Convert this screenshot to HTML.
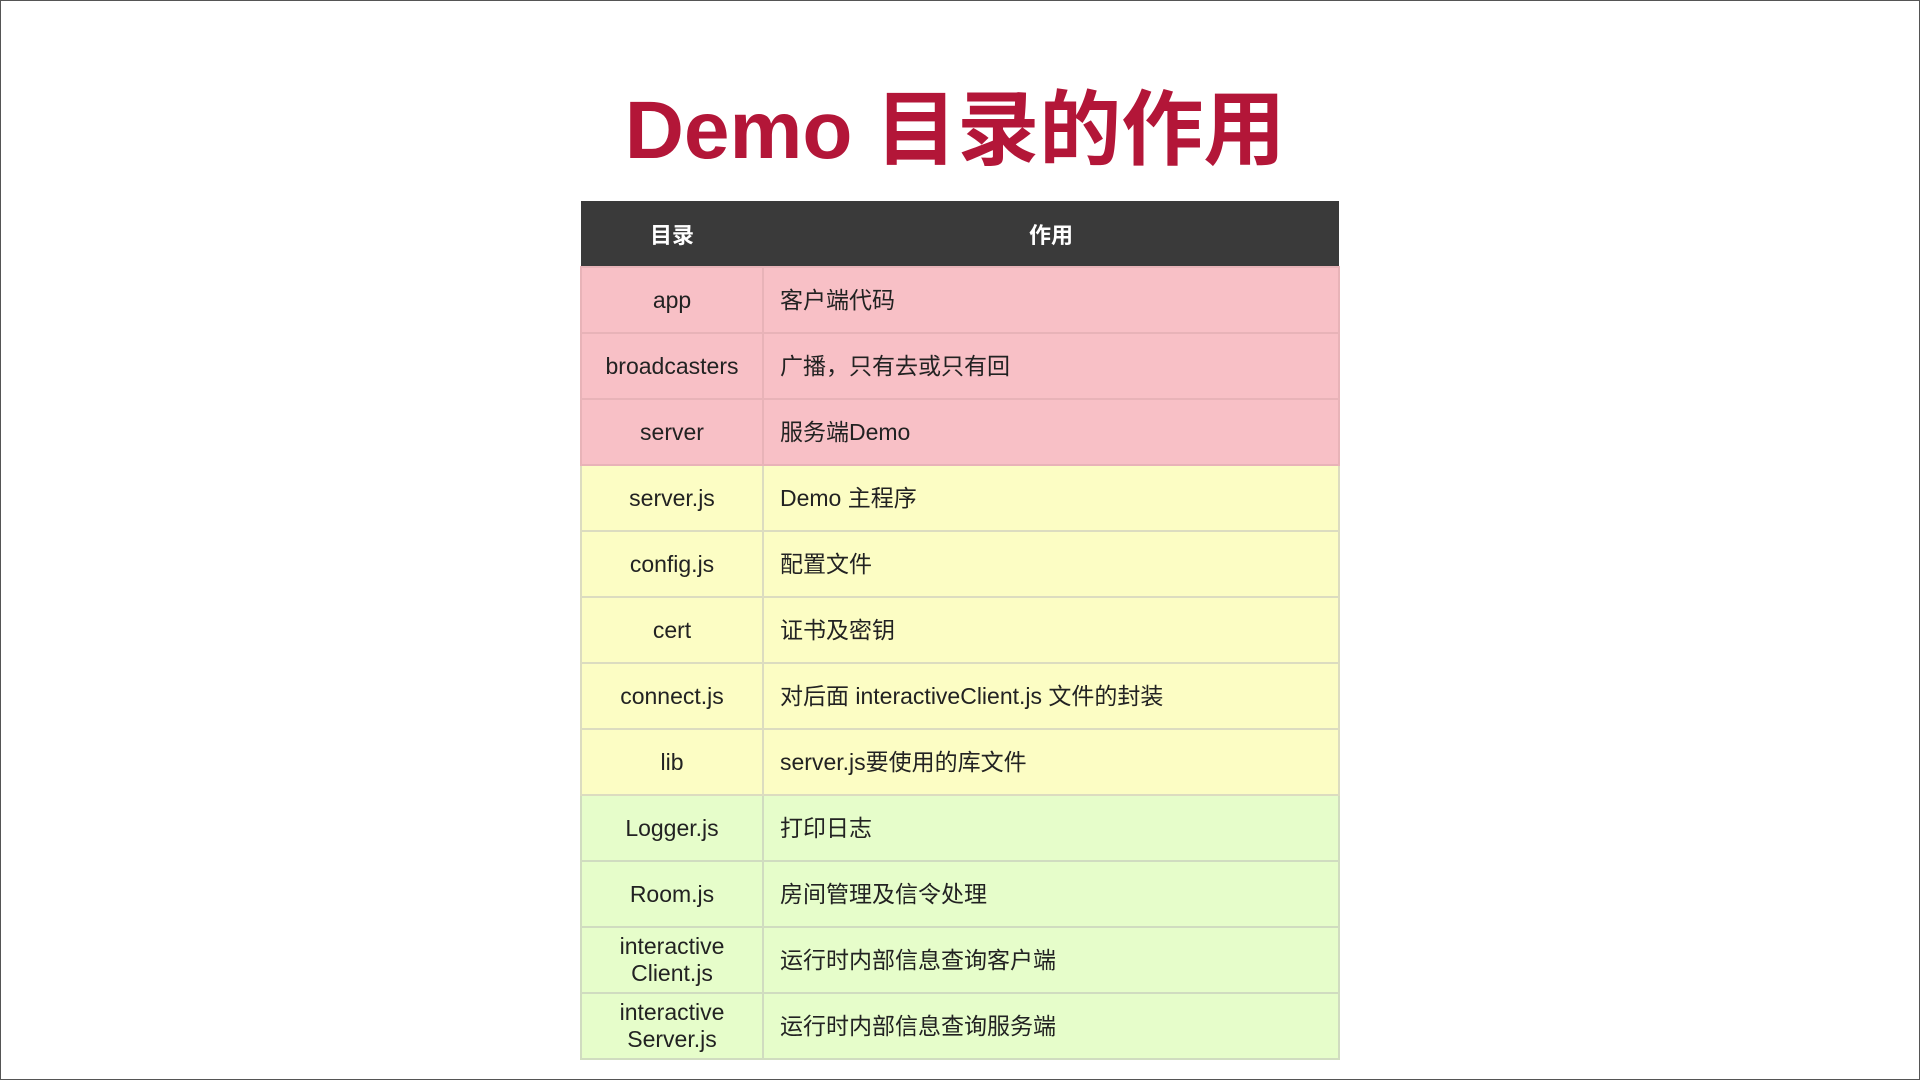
<!DOCTYPE html>
<html><head><meta charset="utf-8"><style>
body{margin:0;width:1920px;height:1080px;background:#fff;position:relative;overflow:hidden;font-family:"Liberation Sans","Noto Sans CJK SC",sans-serif;}
.frame{position:absolute;left:0;top:0;width:1918px;height:1078px;border:1px solid #555;}
h1{position:absolute;left:0;width:1910px;top:81px;margin:0;text-align:center;font-size:82px;line-height:100px;font-weight:bold;color:#b31638;font-family:"Liberation Sans","Noto Sans CJK SC",sans-serif;}
table{position:absolute;left:580px;top:201px;width:760px;border-collapse:collapse;font-size:23px;color:#222;}
th{background:#3a3a3a;color:#fff;height:65px;font-weight:bold;font-size:22px;padding:0;}
td{height:64px;border:2px solid #d9d9d9;padding:0;line-height:27px;}
td:first-child{width:180px;text-align:center;}
td:last-child{padding-left:16px;}
.p td{background:#f8c0c6;border-color:#e8b3b8;}
.y td{background:#fcfdc4;border-color:#dcdcc0;}
.g td{background:#e6fdca;border-color:#d0dcc0;}
</style></head><body>
<div class="frame"></div>
<h1>Demo 目录的作用</h1>
<table>
<tr><th style="width:182px">目录</th><th>作用</th></tr>
<tr class="p"><td>app</td><td>客户端代码</td></tr>
<tr class="p"><td>broadcasters</td><td>广播，只有去或只有回</td></tr>
<tr class="p"><td>server</td><td>服务端Demo</td></tr>
<tr class="y"><td>server.js</td><td>Demo 主程序</td></tr>
<tr class="y"><td>config.js</td><td>配置文件</td></tr>
<tr class="y"><td>cert</td><td>证书及密钥</td></tr>
<tr class="y"><td>connect.js</td><td>对后面 interactiveClient.js 文件的封装</td></tr>
<tr class="y"><td>lib</td><td>server.js要使用的库文件</td></tr>
<tr class="g"><td>Logger.js</td><td>打印日志</td></tr>
<tr class="g"><td>Room.js</td><td>房间管理及信令处理</td></tr>
<tr class="g"><td>interactive<br>Client.js</td><td>运行时内部信息查询客户端</td></tr>
<tr class="g"><td>interactive<br>Server.js</td><td>运行时内部信息查询服务端</td></tr>
</table>
</body></html>
